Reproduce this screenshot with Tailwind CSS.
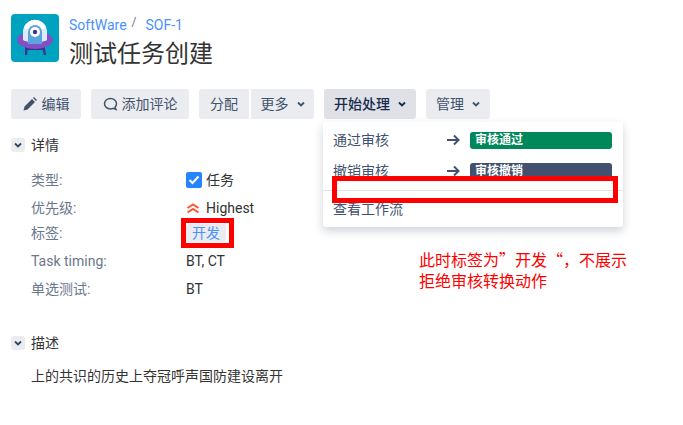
<!DOCTYPE html>
<html lang="zh">
<head>
    <meta charset="UTF-8">
    <title>测试任务创建</title>
    <script src="https://cdn.jsdelivr.net/npm/@tailwindcss/browser@4"></script>
</head>
<body class="bg-white text-[#172b4d] text-sm font-['Roboto','Noto_Sans_CJK_SC',sans-serif]">
    <main class="relative w-[683px] h-[425px] overflow-hidden">
        <!-- Header -->
        <header class="flex gap-[10px] pl-[11px] pt-[14px]">
            <svg class="w-12 h-12 rounded-[4px]" viewBox="0 0 48 48">
                <rect width="48" height="48" fill="#00a3bf"/>
                <path d="M14 34h3l-1 7h-2zM31 34h3l1 7h-2z" fill="#403294"/>
                <rect x="14" y="33" width="20" height="3" fill="#403294"/>
                <ellipse cx="24" cy="26" rx="18" ry="9" fill="#8250c4"/>
                <path d="M12 26V18a12 12 0 0 1 24 0v8c-4 3-20 3-24 0z" fill="#deebff"/>
                <path d="M13 14a11.500 11.500 0 0 1 22 0c-4 2-18 2-22 0z" fill="#ffffff"/>
                <path d="M17 30V18a7 7 0 0 1 14 0v12z" fill="#5ba4e0"/>
                <circle cx="24" cy="18" r="5" fill="#ffffff"/>
                <circle cx="24" cy="18" r="2.200" fill="#403294"/>
            </svg>
            <div>
                <nav class="flex h-[22px] items-center text-[14px] text-[#4a90ff]">
                    <span>SoftWare</span>
                    <span class="ml-[5px] mr-[9px] -mt-1 text-[#6b778c] text-[12px]">/</span>
                    <span>SOF-1</span>
                </nav>
                <h1 class="mt-[1px] text-[24px] leading-[34px] text-[#333333]">测试任务创建</h1>
            </div>
        </header>

        <!-- Toolbar -->
        <div class="flex mt-[18px] pl-[11px] text-[14px] text-[#42526e]">
            <button class="flex items-center justify-center gap-[5px] w-[70px] h-[30px] rounded-[3px] bg-[#ebecf0]">
                <svg class="w-[14px] h-[14px]" viewBox="0 0 14 14"><path d="M0.500 13.500l1-4 7.500-7.500 3 3-7.500 7.500zM10 1l1-1 3 3-1 1z" fill="#42526e"/></svg>
                编辑
            </button>
            <button class="flex items-center justify-center gap-[4px] w-[98px] h-[30px] ml-[10px] rounded-[3px] bg-[#ebecf0]">
                <svg class="w-[15px] h-[14px]" viewBox="0 0 15 14"><path d="M7.500 1.500c3.400 0 6 2.300 6 5.200 0 1.400-.6 2.600-1.500 3.500l1 2.300-3-1.100c-.8.300-1.600.5-2.500.5-3.400 0-6-2.300-6-5.200s2.600-5.200 6-5.200z" fill="none" stroke="#42526e" stroke-width="1.500"/></svg>
                添加评论
            </button>
            <button class="w-[50px] h-[30px] ml-[10px] rounded-l-[3px] bg-[#ebecf0]">分配</button>
            <button class="flex items-center justify-center gap-[8px] w-[63px] h-[30px] ml-[2px] rounded-r-[3px] bg-[#ebecf0]">
                更多
                <svg class="w-2 h-[6px]" viewBox="0 0 8 6"><path d="M1 1.500l3 3 3-3" fill="none" stroke="#42526e" stroke-width="1.800"/></svg>
            </button>
            <button class="flex items-center justify-center gap-[8px] w-[92px] h-[30px] ml-[10px] rounded-[3px] bg-[#dfe1e6] text-[#172b4d] font-medium">
                开始处理
                <svg class="w-2 h-[6px]" viewBox="0 0 8 6"><path d="M1 1.500l3 3 3-3" fill="none" stroke="#172b4d" stroke-width="1.800"/></svg>
            </button>
            <button class="flex items-center justify-center gap-[8px] w-[64px] h-[30px] ml-[10px] rounded-[3px] bg-[#ebecf0]">
                管理
                <svg class="w-2 h-[6px]" viewBox="0 0 8 6"><path d="M1 1.500l3 3 3-3" fill="none" stroke="#42526e" stroke-width="1.800"/></svg>
            </button>
        </div>

        <!-- Details -->
        <section class="mt-[19px] pl-[11px]">
            <div class="flex items-center gap-[6px] h-[14px]">
                <span class="flex items-center justify-center w-[14px] h-[14px] rounded-[3px] bg-[#ebecf0]">
                    <svg class="w-2 h-[6px]" viewBox="0 0 8 6"><path d="M1 1.500l3 3 3-3" fill="none" stroke="#344563" stroke-width="1.800"/></svg>
                </span>
                <h2 class="text-[14px] text-[#333333]">详情</h2>
            </div>
            <dl class="grid grid-cols-[155px_1fr] mt-[13px] pl-[20px] text-[14px] text-[#333333]">
                <dt class="h-[30px] leading-[30px] text-[#6b778c]">类型:</dt>
                <dd class="flex items-center gap-[4px] h-[30px]">
                    <svg class="w-4 h-4 rounded-[2px]" viewBox="0 0 16 16"><rect width="16" height="16" fill="#2684ff"/><path d="M3.500 8l3 3 6-6.500" fill="none" stroke="#ffffff" stroke-width="2"/></svg>
                    任务
                </dd>
                <dt class="h-[26px] leading-[26px] text-[#6b778c]">优先级:</dt>
                <dd class="flex items-center gap-[6px] h-[26px]">
                    <svg class="w-[14px] h-[12px]" viewBox="0 0 14 12"><path d="M1.500 6l5.500-3.500 5.500 3.500M1.500 10.500l5.500-3.500 5.500 3.500" fill="none" stroke="#ff5630" stroke-width="2"/></svg>
                    Highest
                </dd>
                <dt class="h-[24px] leading-[24px] text-[#6b778c]">标签:</dt>
                <dd class="flex items-center h-[24px]">
                    <span class="px-[6px] h-[18px] leading-[18px] rounded-[3px] bg-[#ebecf0] text-[#4a90ff]">开发</span>
                </dd>
                <dt class="h-[32px] leading-[32px] text-[#6b778c]">Task timing:</dt>
                <dd class="h-[32px] leading-[32px]">BT, CT</dd>
                <dt class="h-[24px] leading-[24px] text-[#6b778c]">单选测试:</dt>
                <dd class="h-[24px] leading-[24px]">BT</dd>
            </dl>
        </section>

        <!-- Description -->
        <section class="mt-[35px] pl-[11px]">
            <div class="flex items-center gap-[6px] h-[14px]">
                <span class="flex items-center justify-center w-[14px] h-[14px] rounded-[3px] bg-[#ebecf0]">
                    <svg class="w-2 h-[6px]" viewBox="0 0 8 6"><path d="M1 1.500l3 3 3-3" fill="none" stroke="#344563" stroke-width="1.800"/></svg>
                </span>
                <h2 class="text-[14px] text-[#333333]">描述</h2>
            </div>
            <p class="mt-[14px] pl-[20px] text-[14px] leading-[24px] text-[#333333]">上的共识的历史上夺冠呼声国防建设离开</p>
        </section>

        <!-- Dropdown menu -->
        <div class="absolute left-[323px] top-[122px] w-[300px] h-[105px] rounded-[3px] bg-white shadow-[0_4px_10px_rgba(9,30,66,0.2)] text-[14px] text-[#42526e]">
            <div class="flex items-center h-[18px] mt-[9px] pl-[10px]">
                <span class="w-[114px]">通过审核</span>
                <svg class="w-[23px] h-[12px]" viewBox="0 0 23 12"><path d="M0 6h11M7 1.500l4.500 4.500-4.500 4.500" fill="none" stroke="#42526e" stroke-width="2"/></svg>
                <span class="w-[142px] h-[17px] leading-[17px] pl-[5px] rounded-[3px] bg-[#00875a] text-white text-[12px] font-bold">审核通过</span>
            </div>
            <div class="flex items-center h-[18px] mt-[13px] pl-[10px]">
                <span class="w-[114px]">撤销审核</span>
                <svg class="w-[23px] h-[12px]" viewBox="0 0 23 12"><path d="M0 6h11M7 1.500l4.500 4.500-4.500 4.500" fill="none" stroke="#42526e" stroke-width="2"/></svg>
                <span class="w-[142px] h-[17px] leading-[17px] pl-[5px] rounded-[3px] bg-[#42526e] text-white text-[12px] font-bold">审核撤销</span>
            </div>
            <div class="mt-[10px] border-t border-[#dfe1e6]"></div>
            <div class="h-[18px] leading-[18px] mt-[9px] pl-[10px]">查看工作流</div>
        </div>

        <!-- Annotations -->
        <div class="absolute left-[332px] top-[176px] w-[286px] h-[27px] border-[5px] border-[#ff0000]"></div>
        <div class="absolute left-[181px] top-[218px] w-[53px] h-[30px] border-[5px] border-[#ff0000]"></div>
        <p class="absolute left-[419px] top-[249px] w-[215px] font-['Noto_Sans_CJK_SC',sans-serif] text-[16px] leading-[21px] text-[#ff0000]">此时标签为”开发“，不展示<br>拒绝审核转换动作</p>
    </main>
</body>
</html>
